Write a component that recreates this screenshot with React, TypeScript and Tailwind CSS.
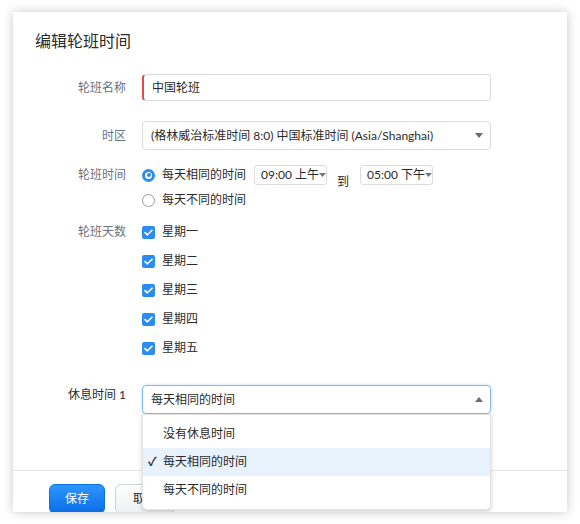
const FONT = "font-['Lato','Noto_Sans_CJK_SC',sans-serif]";

function Caret({ up = false }: { up?: boolean }) {
  return (
    <svg width="8" height="5" viewBox="0 0 8 5" aria-hidden="true" className="shrink-0">
      {up ? <path d="M0 5 L4 0 L8 5 Z" fill="#6b6b6b" /> : <path d="M0 0 L8 0 L4 5 Z" fill="#6b6b6b" />}
    </svg>
  );
}

function SmallCaret() {
  return (
    <svg width="7" height="4" viewBox="0 0 7 4" aria-hidden="true" className="shrink-0">
      <path d="M0 0 L7 0 L3.5 4 Z" fill="#777" />
    </svg>
  );
}

function Radio({ checked, label }: { checked: boolean; label: string }) {
  return (
    <div className="flex items-center h-[20px]">
      {checked ? (
        <span className="w-[13px] h-[13px] rounded-full bg-[#2d8cf0] flex items-center justify-center">
          <span className="w-[7px] h-[7px] rounded-full bg-white flex items-center justify-center">
            <span className="w-[4px] h-[4px] rounded-full bg-[#2d8cf0]" />
          </span>
        </span>
      ) : (
        <span className="w-[13px] h-[13px] rounded-full border border-[#9a9a9a] bg-white" />
      )}
      <span className="ml-[7px] text-[12px] text-[#2a2a2a]">{label}</span>
    </div>
  );
}

function Check({ label }: { label: string }) {
  return (
    <div className="flex items-center h-[20px]">
      <span className="w-[13px] h-[13px] rounded-[2px] bg-[#2d8cf0] flex items-center justify-center">
        <svg width="9" height="7" viewBox="0 0 9 7" aria-hidden="true">
          <path d="M1 3.6 L3.4 5.8 L8 1.2" stroke="#fff" strokeWidth="1.6" fill="none" strokeLinecap="round" strokeLinejoin="round" />
        </svg>
      </span>
      <span className="ml-[7px] text-[12px] text-[#2a2a2a]">{label}</span>
    </div>
  );
}

function TimeSelect({ value }: { value: string }) {
  return (
    <div className="w-[73px] h-[20px] border border-[#dcdcdc] rounded-[3px] bg-white flex items-center pl-[6px] pr-[3px] gap-0">
      <span className="text-[12px] text-[#2a2a2a] whitespace-nowrap">{value}</span>
      <SmallCaret />
    </div>
  );
}

function Row({ label, children, dark = false, center = false, className = '' }: { label: string; children: React.ReactNode; dark?: boolean; center?: boolean; className?: string }) {
  return (
    <div className={`flex ${center ? 'items-center' : 'items-start'} ${className}`}>
      <div className={`w-[113px] text-right text-[12px] leading-[20px] shrink-0 ${dark ? 'text-[#2a2a2a]' : 'text-[#6b7280]'}`}>{label}</div>
      <div className="ml-[16px] w-[349px]">{children}</div>
    </div>
  );
}

const days = ['星期一', '星期二', '星期三', '星期四', '星期五'];

export default function App() {
  return (
    <div className={`w-[580px] h-[524px] bg-white pt-[12px] pl-[13px] overflow-hidden ${FONT}`}>
      <div className="w-[554px] h-[500px] bg-white shadow-[0_0_10px_rgba(0,0,0,0.22)] flex flex-col overflow-hidden">
        <div className="border-b border-[#e5e5e5] pb-[56px]">
          <h1 className="pt-[17px] pl-[22px] text-[16px] leading-[24px] text-[#2a2a2a] font-normal">编辑轮班时间</h1>

          <Row label="轮班名称" center className="mt-[21px]">
            <div className="h-[27px] border border-[#dcdcdc] border-l-2 border-l-[#e5484d] rounded-[4px] flex items-center pl-[8px] text-[12px] text-[#2a2a2a]">
              中国轮班
            </div>
          </Row>

          <Row label="时区" center className="mt-[20px]">
            <div className="h-[29px] border border-[#dcdcdc] rounded-[4px] flex items-center justify-between pl-[8px] pr-[7px] text-[12px] text-[#2a2a2a]">
              <span className="whitespace-nowrap">(格林威治标准时间 8:0) 中国标准时间 (Asia/Shanghai)</span>
              <Caret />
            </div>
          </Row>

          <Row label="轮班时间" className="mt-[15px]">
            <div className="flex flex-col gap-[5px]">
              <div className="flex items-center h-[20px]">
                <Radio checked label="每天相同的时间" />
                <div className="ml-[8px]"><TimeSelect value="09:00 上午" /></div>
                <span className="ml-[10px] mr-[11px] mt-[12px] text-[12px] leading-[13px] text-[#2a2a2a]">到</span>
                <TimeSelect value="05:00 下午" />
              </div>
              <Radio checked={false} label="每天不同的时间" />
            </div>
          </Row>

          <Row label="轮班天数" className="mt-[12px]">
            <div className="flex flex-col gap-[9px]">
              {days.map((d) => (
                <Check key={d} label={d} />
              ))}
            </div>
          </Row>

          <Row label="休息时间 1" dark className="mt-[27px]">
            <div className="relative">
              <div className="h-[29px] border border-[#86b7f7] rounded-[4px] shadow-[0_0_3px_rgba(45,140,240,0.35)] flex items-center justify-between pl-[8px] pr-[7px] text-[12px] text-[#2a2a2a]">
                <span>每天相同的时间</span>
                <Caret up />
              </div>
              <div className="absolute left-0 right-0 top-[29px] z-10 bg-white border border-[#e3e3e3] rounded-b-[5px] shadow-[0_2px_5px_rgba(0,0,0,0.18)] py-[5px]">
                {[
                  { t: '没有休息时间', on: false },
                  { t: '每天相同的时间', on: true },
                  { t: '每天不同的时间', on: false },
                ].map((o) => (
                  <div key={o.t} className={`h-[28px] flex items-center text-[12px] text-[#2a2a2a] ${o.on ? 'bg-[#e8f2fd]' : ''}`}>
                    <span className="w-[20px] pl-[5px] text-[12px] font-bold">{o.on ? '✓' : ''}</span>
                    <span>{o.t}</span>
                  </div>
                ))}
              </div>
            </div>
          </Row>
        </div>

        <div className="flex gap-[10px] pl-[36px] pt-[13px]">
          <button className="w-[56px] h-[30px] rounded-[6px] bg-gradient-to-b from-[#2d95ff] to-[#0b6de6] text-white text-[12px] border border-[#0e6fe0]">保存</button>
          <button className="w-[60px] h-[30px] rounded-[6px] bg-gradient-to-b from-white to-[#eef0f3] text-[#2a2a2a] text-[12px] border border-[#cfd3d8]">取消</button>
        </div>
      </div>
    </div>
  );
}
